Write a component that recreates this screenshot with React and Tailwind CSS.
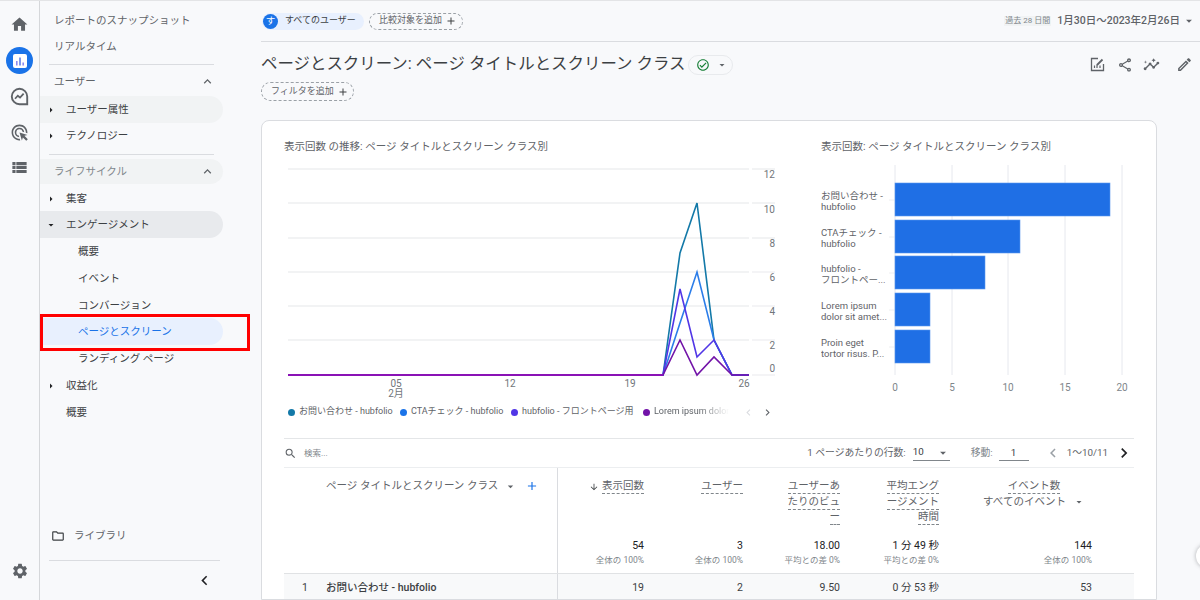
import { MdHome, MdSettings, MdAdsClick, MdViewList, MdOutlineFolder, MdChevronLeft, MdChevronRight, MdExpandLess, MdArrowDropDown, MdArrowRight, MdArrowDownward, MdAdd, MdSearch, MdOutlineCheckCircle, MdOutlineShare, MdOutlineInsights, MdOutlineEdit } from "react-icons/md"

const lineSeries = [
  { color: "#1379a8", points: "288,375 663,375 680,253 697,203 714,340 732,375 749,375" },
  { color: "#2b7de9", points: "288,375 663,375 680,323 697,272 714,340 732,375 749,375" },
  { color: "#5136e6", points: "288,375 663,375 680,289 697,357 714,340 732,375 749,375" },
  { color: "#7213a8", points: "288,375 663,375 680,340 697,375 714,357 732,375 749,375" },
]

const gridY = [169, 203, 238, 272, 306, 340, 375]
const yLabels = [["12", 178], ["10", 213], ["8", 247], ["6", 281], ["4", 315], ["2", 349], ["0", 372]]
const xLabels = [["05", 396], ["12", 510], ["19", 630], ["26", 744]]

const bars = [
  { top: 183, width: 215, lines: ["お問い合わせ -", "hubfolio"] },
  { top: 220, width: 125, lines: ["CTAチェック -", "hubfolio"] },
  { top: 256, width: 90, lines: ["hubfolio -", "フロントペー..."] },
  { top: 293, width: 35, lines: ["Lorem ipsum", "dolor sit amet..."] },
  { top: 330, width: 35, lines: ["Proin eget", "tortor risus. P..."] },
]

const legend = [
  { color: "bg-[#1379a8]", label: "お問い合わせ - hubfolio", cls: "w-[112px]" },
  { color: "bg-[#1a73e8]", label: "CTAチェック - hubfolio", cls: "w-[111px]" },
  { color: "bg-[#5136e6]", label: "hubfolio - フロントページ用", cls: "w-[129px]" },
]

const columns = [
  { head: ["表示回数"], sort: true, total: "54", sub: "全体の 100%", value: "19" },
  { head: ["ユーザー"], total: "3", sub: "全体の 100%", value: "2" },
  { head: ["ユーザーあ", "たりのビュ", "ー"], total: "18.00", sub: "平均との差 0%", value: "9.50" },
  { head: ["平均エング", "ージメント", "時間"], total: "1 分 49 秒", sub: "平均との差 0%", value: "0 分 53 秒" },
]

const NavItem = ({ label, level = 0, arrow, pill, active, chevron, muted, className = "h-[27px]" }) => {
  const pad = level == 0 ? "pl-[14px]" : level == 1 ? "pl-[26px]" : "pl-[38px]"
  let bg = ""
  if (pill == "light") bg = "bg-[#f1f3f4]"
  if (pill == "dark") bg = "bg-[#e8eaed]"
  if (active) bg = "bg-[#e8f0fe]"
  return (
    <div className={`relative flex items-center w-[183px] rounded-r-full text-[10.5px] ${pad} ${bg} ${className} ${active ? "text-[#1a73e8]" : muted ? "text-[#80868b]" : level == 0 ? "text-[#5f6368]" : "text-[#3c4043]"}`}>
      {arrow == "right" && <MdArrowRight className="absolute left-[5px] text-[12px] text-[#202124]" />}
      {arrow == "down" && <MdArrowDropDown className="absolute left-[5px] text-[12px] text-[#202124]" />}
      <span>{label}</span>
      {chevron && <MdExpandLess className="absolute left-[160px] text-[15px] text-[#5f6368]" />}
    </div>
  )
}

const Rail = () => (
  <div className="flex flex-col items-center w-[40px] h-full border-r border-[#d5d7da] pt-[6px] text-[#5f6368] shrink-0">
    <div className="flex items-center justify-center h-[35.75px]"><MdHome className="text-[19px]" /></div>
    <div className="flex items-center justify-center h-[35.75px]">
      <div className="flex items-center justify-center w-[27px] h-[27px] rounded-full bg-[#1a73e8]">
        <svg width="14" height="14" viewBox="0 0 14 14">
          <rect width="14" height="14" rx="2" fill="#ffffff" />
          <rect x="3" y="7" width="1.6" height="4.5" fill="#8e8cf0" />
          <rect x="6.2" y="3.5" width="1.6" height="8" fill="#5f7fe8" />
          <rect x="9.4" y="8.5" width="1.6" height="3" fill="#8e8cf0" />
        </svg>
      </div>
    </div>
    <div className="flex items-center justify-center h-[35.75px]">
      <svg width="19" height="19" viewBox="0 0 17 17" fill="none" stroke="#5f6368">
        <path d="M15.4 15.4H8.5A6.9 6.9 0 1 1 15.4 8.5Z" strokeWidth="1.7" />
        <path d="M4.5 10.5L7 7.8L9 9.5L12.2 6" strokeWidth="1.6" />
      </svg>
    </div>
    <div className="flex items-center justify-center h-[35.75px]"><MdAdsClick className="text-[19px]" /></div>
    <div className="flex items-center justify-center h-[35.75px]"><MdViewList className="text-[19px]" /></div>
    <div className="flex items-center justify-center h-[36px] mt-auto mb-[11px]"><MdSettings className="text-[18px]" /></div>
  </div>
)

const Sidebar = () => (
  <div className="flex flex-col w-[221px] h-full pt-[6px] shrink-0">
    <NavItem label="レポートのスナップショット" />
    <NavItem label="リアルタイム" className="h-[26px]" />
    <div className="w-[165px] ml-[9px] mt-[4px] border-t border-[#dadce0]" />
    <div className="mt-[3px]"><NavItem label="ユーザー" chevron className="h-[27px]" /></div>
    <div className="mt-[1px]"><NavItem label="ユーザー属性" level={1} arrow="right" pill="light" /></div>
    <NavItem label="テクノロジー" level={1} arrow="right" className="h-[26px]" />
    <div className="w-[165px] ml-[9px] mt-[5px] border-t border-[#dadce0]" />
    <div className="mt-[4px]"><NavItem label="ライフサイクル" chevron pill="light" muted className="h-[25px]" /></div>
    <div className="mt-[1px]"><NavItem label="集客" level={1} arrow="right" className="h-[26px] pt-[1px]" /></div>
    <NavItem label="エンゲージメント" level={1} arrow="down" pill="dark" />
    <NavItem label="概要" level={2} />
    <NavItem label="イベント" level={2} />
    <NavItem label="コンバージョン" level={2} className="h-[26px] pt-[2px]" />
    <NavItem label="ページとスクリーン" level={2} active />
    <NavItem label="ランディング ページ" level={2} />
    <NavItem label="収益化" level={1} arrow="right" />
    <NavItem label="概要" level={1} />
    <div className="flex items-center gap-[9px] h-[26px] mt-auto pl-[11px] text-[10.5px] text-[#5f6368]">
      <MdOutlineFolder className="text-[14px] text-[#3c4043]" />
      <span>ライブラリ</span>
    </div>
    <div className="w-[171px] ml-[9px] mt-[11px] border-t border-[#dadce0]" />
    <div className="flex items-center h-[39px] pl-[155px]"><MdChevronLeft className="text-[19px] text-[#202124]" /></div>
  </div>
)

const LineChart = () => (
  <svg width="500" height="235" viewBox="284 165 500 235" className="block">
    {gridY.map((y) => (
      <g key={y}>
        <line x1="288" x2="749" y1={y} y2={y} stroke="#eeeff1" strokeWidth="1.3" />
        <line x1="752" x2="775" y1={y} y2={y} stroke="#eeeff1" strokeWidth="1.3" />
      </g>
    ))}
    {lineSeries.map((s) => (
      <polyline key={s.color} points={s.points} fill="none" stroke={s.color} strokeWidth="1.6" />
    ))}
    <line x1="288" x2="663" y1="375" y2="375" stroke="#8a12b5" strokeWidth="1.8" />
    {yLabels.map(([t, y]) => (
      <text key={t} x="775" y={y} textAnchor="end" fontSize="10" fill="#70757a">{t}</text>
    ))}
    {xLabels.map(([t, x]) => (
      <text key={t} x={x} y="387" textAnchor="middle" fontSize="10" fill="#70757a">{t}</text>
    ))}
    <text x="396" y="397" textAnchor="middle" fontSize="10" fill="#70757a">2月</text>
  </svg>
)

const BarChart = () => (
  <svg width="320" height="235" viewBox="821 165 320 235" className="block">
    {[895, 952, 1008, 1065, 1122].map((x) => (
      <line key={x} x1={x} x2={x} y1="165" y2="375" stroke="#e6e8ee" />
    ))}
    {bars.map((b) => (
      <g key={b.top}>
        <line x1="889" x2="895" y1={b.top + 17} y2={b.top + 17} stroke="#eeeff1" />
        <rect x="895" y={b.top} width={b.width} height="33" fill="#1f6fe5" stroke="#5b96ee" strokeWidth="0.6" />
        <text x="821" y={b.top + 16} fontSize="9.5" fill="#5f6368">{b.lines[0]}</text>
        <text x="821" y={b.top + 27} fontSize="9.5" fill="#5f6368">{b.lines[1]}</text>
      </g>
    ))}
    {[[0, 895], [5, 952], [10, 1008], [15, 1065], [20, 1122]].map(([t, x]) => (
      <text key={t} x={x} y="391" textAnchor="middle" fontSize="10" fill="#80868b">{t}</text>
    ))}
  </svg>
)

const Legend = () => (
  <div className="flex items-center h-[24px] text-[9px] text-[#5f6368] pl-[4px]">
    {legend.map((l) => (
      <div key={l.label} className={`flex items-center gap-[4px] shrink-0 ${l.cls}`}>
        <span className={`w-[7px] h-[7px] rounded-full shrink-0 ${l.color}`} />
        <span className="whitespace-nowrap">{l.label}</span>
      </div>
    ))}
    <div className="flex items-center gap-[4px] w-[92px] shrink-0 ml-[3px]">
      <span className="w-[7px] h-[7px] rounded-full shrink-0 bg-[#7213a8]" />
      <span className="whitespace-nowrap [mask-image:linear-gradient(to_right,black_60%,transparent_100%)]">Lorem ipsum dolor</span>
    </div>
    <MdChevronLeft className="text-[13px] text-[#dadce0] ml-[7px]" />
    <MdChevronRight className="text-[13px] text-[#5f6368] ml-[6px]" />
  </div>
)

const HeadCell = ({ col }) => (
  <div className="flex flex-col h-full pt-[11px] text-right">
    <div className="flex flex-col items-end text-[10.5px] text-[#5f6368] gap-[0.5px]">
      {col.head.map((line) => (
        <div key={line} className="flex items-center gap-[3px] leading-[14px]">
          {col.sort && <MdArrowDownward className="text-[10px] text-[#3c4043]" />}
          <span className="border-b border-dashed border-[#80868b]">{line}</span>
        </div>
      ))}
    </div>
    <div className="mt-auto pb-[6px]">
      <div className="text-[10.5px] leading-[14px] text-[#202124]">{col.total}</div>
      <div className="text-[8.5px] leading-[14px] text-[#80868b]">{col.sub}</div>
    </div>
  </div>
)

const DataTable = () => (
  <div className="mx-[22px] border-t border-[#e4e6e8] mt-[14px]">
    <div className="flex items-center h-[29px] border-b border-[#eceef0] text-[9.8px] text-[#5f6368]">
      <MdSearch className="text-[13px]" />
      <span className="ml-[7px] text-[8.5px] text-[#80868b]">検索...</span>
      <span className="ml-auto">1 ページあたりの行数:</span>
      <div className="flex items-center justify-between w-[37px] ml-[7px] border-b border-[#80868b] h-[15px]">
        <span className="text-[#3c4043]">10</span>
        <MdArrowDropDown className="text-[14px]" />
      </div>
      <span className="ml-[21px] text-[#80868b]">移動:</span>
      <div className="w-[30px] ml-[6px] border-b border-[#80868b] text-center text-[#3c4043] h-[15px]">1</div>
      <MdChevronLeft className="text-[18px] text-[#9aa0a6] ml-[15px]" />
      <span className="ml-[5px]">1〜10/11</span>
      <MdChevronRight className="text-[20px] text-[#202124] ml-[6px]" />
    </div>
    <div className="grid grid-cols-[274px_86px_99px_97px_99px_1fr] h-[106px] border-b border-[#e0e2e4]">
      <div className="flex items-start border-r border-[#dadce0] pt-[11px] pl-[42px] text-[10.5px] text-[#5f6368]">
        <span className="leading-[14px]">ページ タイトルとスクリーン クラス</span>
        <MdArrowDropDown className="text-[13px] ml-[6px] mt-[1px]" />
        <MdAdd className="text-[14px] ml-[8px] text-[#1a73e8]" />
      </div>
      {columns.map((col) => (
        <div key={col.total}><HeadCell col={col} /></div>
      ))}
      <div className="flex flex-col h-full pt-[11px] pr-[42px] text-right">
        <div className="flex flex-col items-center w-[102px] ml-auto mr-[7px] text-[10.5px] text-[#5f6368]">
          <span className="leading-[14px] border-b border-dashed border-[#80868b]">イベント数</span>
          <div className="flex items-center gap-[7px] leading-[16px] whitespace-nowrap">
            <span>すべてのイベント</span>
            <MdArrowDropDown className="text-[12px]" />
          </div>
        </div>
        <div className="mt-auto pb-[6px]">
          <div className="text-[10.5px] leading-[14px] text-[#202124]">144</div>
          <div className="text-[8.5px] leading-[14px] text-[#80868b]">全体の 100%</div>
        </div>
      </div>
    </div>
    <div className="grid grid-cols-[274px_86px_99px_97px_99px_1fr] h-[28px] items-center bg-[#f8f9fa] text-[10.5px] text-[#3c4043]">
      <div className="flex items-center h-full border-r border-[#dadce0]">
        <span className="w-[42px] pl-[18px]">1</span>
        <span className="font-medium">お問い合わせ - hubfolio</span>
      </div>
      {columns.map((col) => (
        <div key={col.total} className="text-right">{col.value}</div>
      ))}
      <div className="text-right pr-[42px]">53</div>
    </div>
  </div>
)

const Header = () => (
  <div className="flex items-center h-[41px] pl-[1px] pr-[4px] border-b border-[#dadce0]">
    <div className="flex items-center gap-[7px] h-[17px] w-[102px] pl-[1px] rounded-full bg-[#e8f0fe] text-[9px] text-[#3c4043]">
      <span className="flex items-center justify-center w-[15px] h-[15px] rounded-full bg-[#1a73e8] text-white text-[9.5px]">す</span>
      <span>すべてのユーザー</span>
    </div>
    <div className="flex items-center gap-[3px] h-[17px] ml-[5px] pl-[9px] pr-[5px] rounded-full border border-dashed border-[#9aa0a6] text-[9px] text-[#5f6368]">
      <span>比較対象を追加</span>
      <MdAdd className="text-[12px] text-[#3c4043]" />
    </div>
    <span className="ml-auto px-[1px] bg-[#f1f3f4] text-[8px] leading-[10px] text-[#80868b]">過去 28 日間</span>
    <span className="ml-[6px] text-[10.5px] font-medium text-[#5f6368]">1月30日〜2023年2月26日</span>
    <MdArrowDropDown className="text-[14px] text-[#5f6368] ml-[2px]" />
  </div>
)

const Title = () => (
  <div>
    <div className="flex items-center h-[41px] pt-[4px] pr-[7px]">
      <h1 className="text-[16.45px] font-normal text-[#3c4043] whitespace-nowrap">ページとスクリーン: ページ タイトルとスクリーン クラス</h1>
      <div className="flex items-center gap-[8px] h-[20px] w-[45px] ml-[2px] pl-[7px] rounded-full border border-[#e8eaed]">
        <MdOutlineCheckCircle className="text-[14px] text-[#188038]" />
        <MdArrowDropDown className="text-[12px] text-[#5f6368] -ml-[2px]" />
      </div>
      <div className="flex items-center ml-auto text-[#5f6368]">
        <svg width="15" height="15" viewBox="0 0 15 15" fill="none" stroke="#5f6368" strokeWidth="1.3">
          <path d="M8 1.5H1.5V13.5H13.5V7" />
          <path d="M7 8L12.5 2.5" strokeWidth="1.8" />
          <path d="M4.5 11V8.5M7 11V7.5M10 11V8.5" strokeWidth="1.2" />
        </svg>
        <MdOutlineShare className="text-[16px] ml-[12px]" />
        <MdOutlineInsights className="text-[17px] ml-[10px]" />
        <MdOutlineEdit className="text-[17px] ml-[16px]" />
      </div>
    </div>
    <div className="flex items-center gap-[3px] w-fit h-[19px] -mt-[1px] pl-[9px] pr-[4px] rounded-full border border-dashed border-[#9aa0a6] text-[9px] text-[#5f6368]">
      <span>フィルタを追加</span>
      <MdAdd className="text-[12px] text-[#3c4043]" />
    </div>
  </div>
)

const App = () => {
  return (
    <div className="relative flex w-[1200px] h-[600px] overflow-hidden bg-[#f8f9fb] border-t border-[#e3e4e6] [font-family:Roboto,'Noto_Sans_CJK_JP',sans-serif]">
      <Rail />
      <Sidebar />
      <div className="flex flex-col flex-1 min-w-0">
        <Header />
        <Title />
        <div className="w-[896px] mt-[19px] flex-1 bg-white border border-[#dadce0] rounded-t-[8px] overflow-hidden">
          <div className="flex pt-[19px]">
            <div className="w-[537px] ml-[22px] shrink-0">
              <div className="h-[14px] text-[10.5px] leading-[14px] text-[#5f6368]">表示回数 の推移: ページ タイトルとスクリーン クラス別</div>
              <div className="mt-[11px]"><LineChart /></div>
              <Legend />
            </div>
            <div className="w-[320px]">
              <div className="h-[14px] text-[10.5px] leading-[14px] text-[#5f6368]">表示回数: ページ タイトルとスクリーン クラス別</div>
              <div className="mt-[11px]"><BarChart /></div>
            </div>
          </div>
          <DataTable />
        </div>
      </div>
      <div className="absolute left-[40px] top-[313px] w-[210px] h-[37px] border-[3px] border-[#ff0000]" />
      <div className="absolute left-[1196px] top-[543px] w-[24px] h-[24px] rounded-full bg-white shadow-[0_0_4px_rgba(60,64,67,0.4)]" />
    </div>
  )
}

export default App
